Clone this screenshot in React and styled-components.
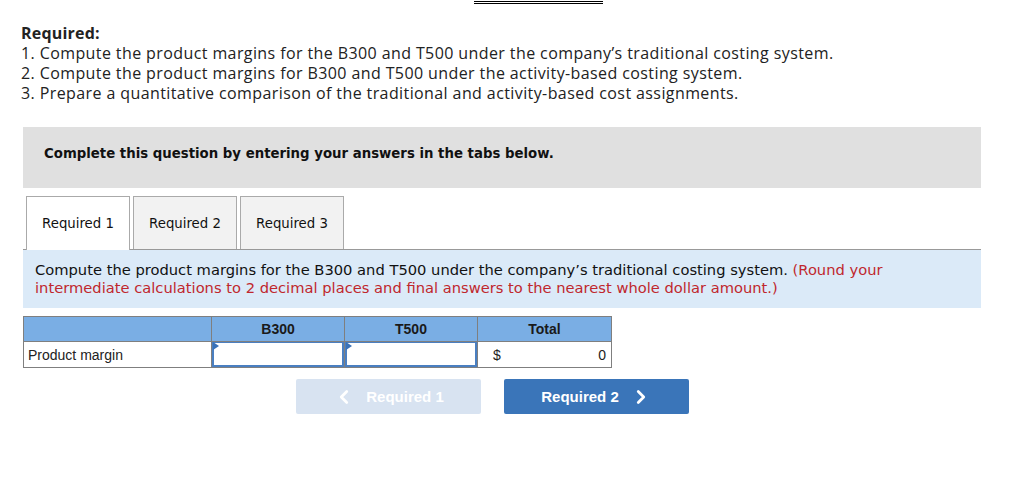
import styled, { createGlobalStyle } from 'styled-components'
import { ChevronLeft, ChevronRight } from 'lucide-react'

const GlobalStyle = createGlobalStyle`
  body {
    margin: 0;
    background: #ffffff;
    font-family: "Open Sans", "Liberation Sans", sans-serif;
    color: #1a1a1a;
  }
`;

const Page = styled.div`
  width: 1033px;
  padding-left: 21px;
  box-sizing: border-box;
`;

const TopRule = styled.div`
  width: 129px;
  margin-left: 453px;
  margin-top: 1px;
  border-top: 3px double #000;
`;

const Intro = styled.div`
  margin-top: 19px;
  font-size: 16px;
  line-height: 20px;
  letter-spacing: 0.4px;
  color: #222;
`;

const IntroTitle = styled.div`
  font-weight: bold;
  letter-spacing: 0.2px;
`;

const Panel = styled.div`
  margin-left: 2px;
  width: 958px;
`;

const Banner = styled(Panel)`
  margin-top: 24px;
  height: 61px;
  background: #e0e0e0;
  display: flex;
  align-items: center;
  padding: 0 0 8px 21px;
  box-sizing: border-box;
  font-family: "DejaVu Sans", Verdana, sans-serif;
  font-weight: bold;
  font-size: 13.3px;
  color: #111;
`;

const TabRow = styled(Panel)`
  margin-top: 8px;
  display: flex;
  gap: 2px;
  padding-left: 3px;
  box-sizing: border-box;
  border-bottom: 1px solid #999;
  height: 54px;
  align-items: flex-end;
`;

const Tab = styled.div`
  width: 104px;
  box-sizing: border-box;
  border: 1px solid #aaa;
  border-bottom: none;
  background: ${p => (p.$active ? '#ffffff' : '#f2f2f2')};
  margin-bottom: ${p => (p.$active ? '-1px' : '0')};
  height: ${p => (p.$active ? '54px' : '53px')};
  display: flex;
  align-items: center;
  justify-content: center;
  padding-bottom: ${p => (p.$active ? '1px' : '0')};
  font-family: "DejaVu Sans", Verdana, sans-serif;
  font-size: 13.3px;
  color: #111;
  & + & {
    margin-left: ${p => (p.$wide ? '1px' : '0')};
  }
`;

const Instructions = styled(Panel)`
  height: 58px;
  background: #dbeaf8;
  padding: 11px 70px 0 12px;
  box-sizing: border-box;
  font-family: "DejaVu Sans", Verdana, sans-serif;
  font-size: 14.7px;
  line-height: 18px;
  color: #111;
`;

const Note = styled.span`
  color: #c0272d;
`;

const Grid = styled.table`
  margin-left: 2px;
  margin-top: 8px;
  border-collapse: collapse;
  font-family: "Liberation Sans", Arial, sans-serif;
  font-size: 14px;
  color: #222;
`;

const Head = styled.th`
  width: ${p => p.$w}px;
  height: 24px;
  padding: 0;
  background: #7aaee4;
  border: 1px solid #7f7f7f;
  font-weight: bold;
  text-align: center;
  color: #1a1a1a;
`;

const Cell = styled.td`
  height: 24px;
  padding: 0;
  border: 1px solid #7f7f7f;
`;

const Label = styled.div`
  padding: 1px 0 0 4px;
  line-height: 24px;
`;

const InputBox = styled.div`
  position: relative;
  height: 25px;
  box-sizing: border-box;
  border: 2px solid #4a7fc1;
  border-top-width: 1px;
  background: #fff;
  &::before {
    content: '';
    position: absolute;
    left: -1px;
    top: 0;
    border-top: 4px solid transparent;
    border-bottom: 4px solid transparent;
    border-left: 6px solid #3a72b8;
    transform: translateY(-1px);
  }
`;

const TotalCell = styled.div`
  display: flex;
  justify-content: space-between;
  padding: 1px 5px 0 15px;
  line-height: 24px;
`;

const Buttons = styled.div`
  display: flex;
  gap: 23px;
  margin-top: 11px;
  margin-left: 275px;
`;

const NavButton = styled.button`
  width: 185px;
  height: 35px;
  border: none;
  border-radius: 2px;
  background: ${p => (p.$disabled ? '#d8e3f1' : '#3a75b9')};
  color: #fff;
  font-family: "Liberation Sans", Arial, sans-serif;
  font-weight: bold;
  font-size: 15px;
  display: flex;
  align-items: center;
  justify-content: center;
  gap: 11px;
  padding: 0;
  cursor: ${p => (p.$disabled ? 'default' : 'pointer')};
  svg {
    flex: none;
  }
`;

export default function App() {
  return (
    <Page>
      <GlobalStyle />
      <TopRule />
      <Intro>
        <IntroTitle>Required:</IntroTitle>
        <div>1. Compute the product margins for the B300 and T500 under the company’s traditional costing system.</div>
        <div>2. Compute the product margins for B300 and T500 under the activity-based costing system.</div>
        <div>3. Prepare a quantitative comparison of the traditional and activity-based cost assignments.</div>
      </Intro>

      <Banner>Complete this question by entering your answers in the tabs below.</Banner>

      <TabRow>
        <Tab $active>Required 1</Tab>
        <Tab>Required 2</Tab>
        <Tab $wide>Required 3</Tab>
      </TabRow>

      <Instructions>
        Compute the product margins for the B300 and T500 under the company’s traditional costing system.{' '}
        <Note>(Round your intermediate calculations to 2 decimal places and final answers to the nearest whole dollar amount.)</Note>
      </Instructions>

      <Grid>
        <thead>
          <tr>
            <Head $w={187}></Head>
            <Head $w={132}>B300</Head>
            <Head $w={132}>T500</Head>
            <Head $w={133}>Total</Head>
          </tr>
        </thead>
        <tbody>
          <tr>
            <Cell><Label>Product margin</Label></Cell>
            <Cell><InputBox /></Cell>
            <Cell><InputBox /></Cell>
            <Cell><TotalCell><span>$</span><span>0</span></TotalCell></Cell>
          </tr>
        </tbody>
      </Grid>

      <Buttons>
        <NavButton $disabled disabled>
          <ChevronLeft size={22} strokeWidth={3} />
          <span>Required 1</span>
        </NavButton>
        <NavButton>
          <span>Required 2</span>
          <ChevronRight size={22} strokeWidth={3} />
        </NavButton>
      </Buttons>
    </Page>
  )
}
